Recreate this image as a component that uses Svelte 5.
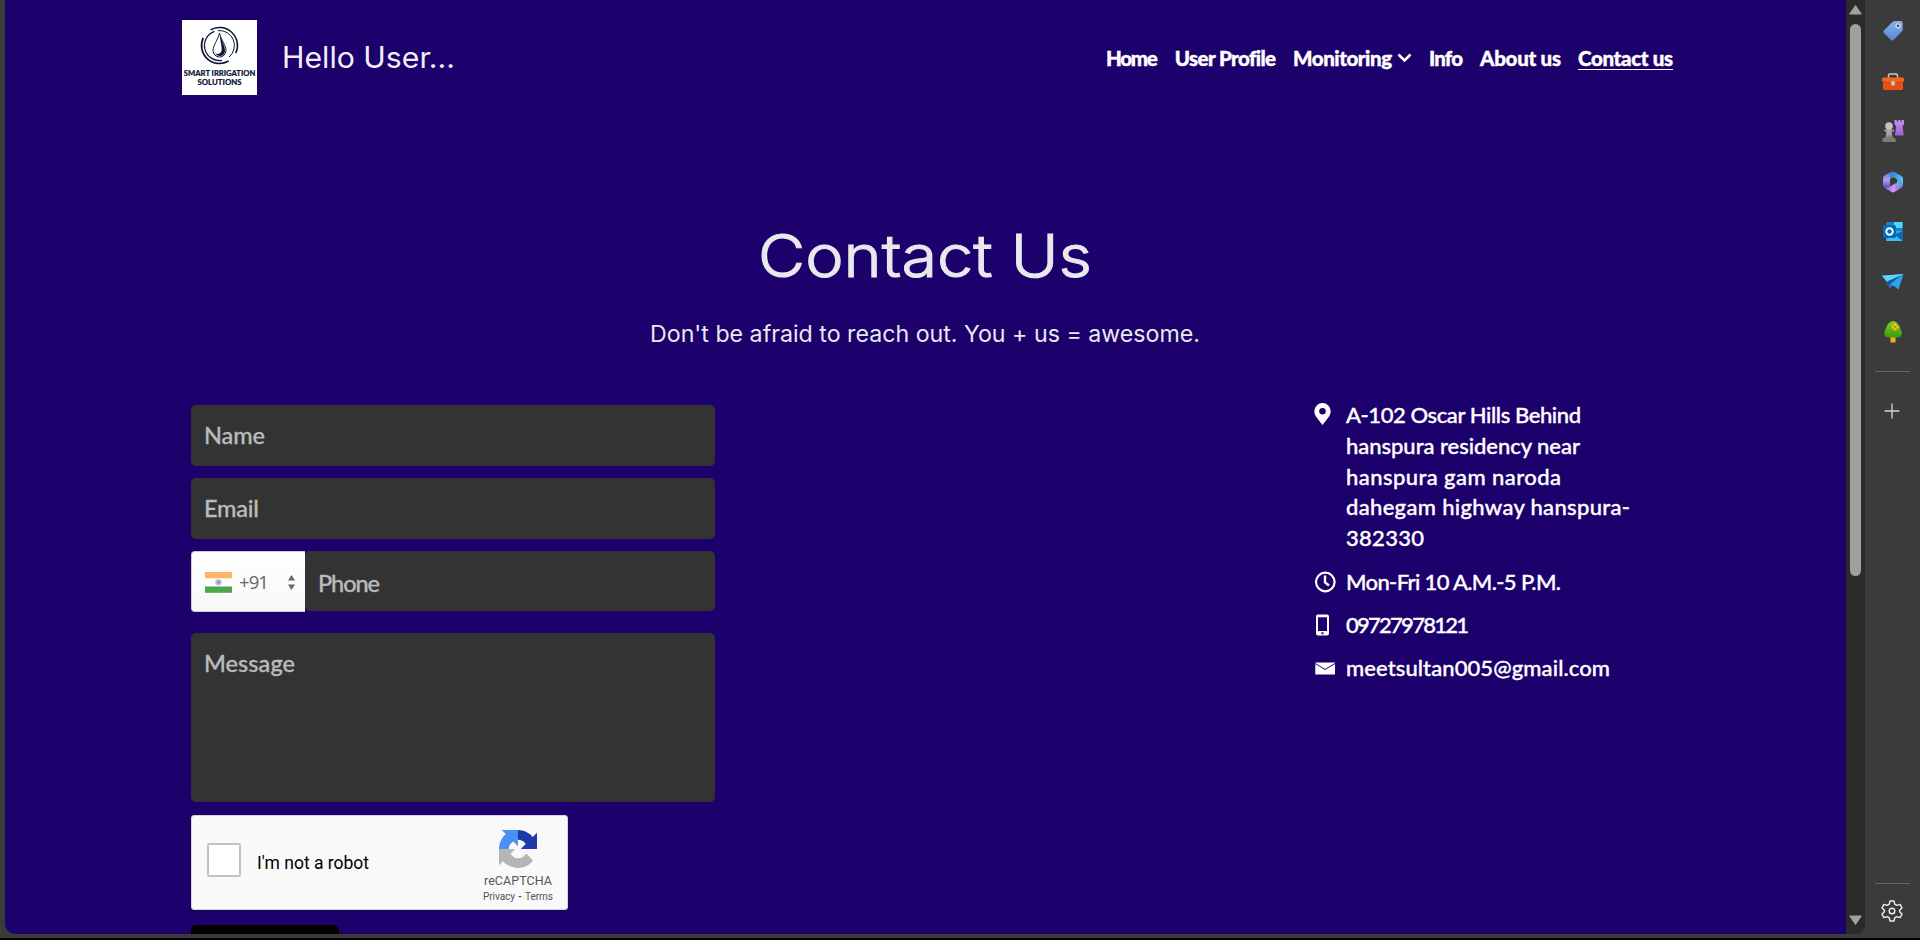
<script>
  const nav = [
    { label: 'Home', w: 52 },
    { label: 'User Profile', w: 101 },
    { label: 'Monitoring', w: 99, menu: true },
    { label: 'Info', w: 34 },
    { label: 'About us', w: 81 },
    { label: 'Contact us', w: 95, active: true }
  ];
  const address = [
    ['A-102 Oscar Hills Behind', 235],
    ['hanspura residency near', 234],
    ['hanspura gam naroda', 215],
    ['dahegam highway hanspura-', 284],
    ['382330', 78]
  ];

  // Spreads the letters of a line so that it fills the given width.
  function track(node, width) {
    const natural = node.getBoundingClientRect().width;
    const gap = (width - natural) / Math.max(1, node.textContent.length - 1);
    node.style.letterSpacing = gap + 'px';
    node.style.marginRight = -gap + 'px';
  }

  // Widens the letters themselves, for the extended display headings.
  function stretch(node, width) {
    const natural = node.getBoundingClientRect().width;
    node.style.width = width + 'px';
    node.style.textAlign = 'left';
    node.style.transformOrigin = '0 0';
    node.style.transform = `scaleX(${width / natural})`;
  }
</script>

<div class="window">
  <main class="page">
    <header>
      <div class="logo">
        <svg width="75" height="75" viewBox="0 0 75 75">
          <g fill="none" stroke="#0b1736">
            <path d="M28.500 9.900A18 18 0 0 1 53.800 33.100" stroke-width="1.500" />
            <path d="M36 10.600A15 15 0 0 1 47.100 37" stroke-width="1" />
            <path d="M21.200 17.900A18 18 0 0 0 46.500 41.100" stroke-width="1.700" />
            <path d="M32.400 11.400A15 15 0 0 0 40 40.300" stroke-width="1.200" />
            <path d="M37.500 13C36 20 31 25 31 30.500A6.500 6.500 0 0 0 44 30.500C44 25 39 20 37.500 13Z" stroke-width="1" />
          </g>
          <path d="M38 15C40 22 43 26 43 30.500C43 36 37 38 33 33.500C38 35 40.500 32 39.500 27C39 22 38 20 38 15Z" fill="#0b1736" />
          <g font-family="Lato, sans-serif" font-weight="900" font-size="6.800" fill="#0b1736" stroke="#0b1736" stroke-width=".15">
            <text x="1.800" y="56" textLength="71.500" lengthAdjust="spacingAndGlyphs">SMART IRRIGATION</text>
            <text x="15.500" y="65" textLength="44" lengthAdjust="spacingAndGlyphs">SOLUTIONS</text>
          </g>
        </svg>
      </div>
      <div class="hello"><span use:stretch={173}>Hello User...</span></div>
      <nav>
        {#each nav as item}
          <a class:active={item.active} href="#top">
            <span class="label" use:track={item.w}>{item.label}</span>
            {#if item.menu}
              <svg class="chev" width="15" height="10" viewBox="0 0 15 10"><path d="M1.500 1.500L7.500 7.500L13.500 1.500" fill="none" stroke="#fff" stroke-width="2.600" /></svg>
            {/if}
          </a>
        {/each}
      </nav>
    </header>

    <section class="title">
      <h1><span use:stretch={334}>Contact Us</span></h1>
      <p><span use:stretch={550}>Don't be afraid to reach out. You + us = awesome.</span></p>
    </section>

    <div class="columns">
      <form>
        <div class="field"><span use:track={61}>Name</span></div>
        <div class="field"><span use:track={55}>Email</span></div>
        <div class="phone">
          <div class="code">
            <svg width="27" height="21" viewBox="0 0 27 21">
              <rect width="27" height="21" fill="#fff" />
              <rect width="27" height="6.300" fill="#ffb366" />
              <rect y="14.500" width="27" height="6.300" fill="#4ca64c" />
              <circle cx="13.500" cy="10.300" r="3.300" fill="#c5c3e3" />
              <circle cx="13.500" cy="10.300" r="1.500" fill="#8a86c4" />
            </svg>
            <span class="dial">+91</span>
            <svg class="sort" width="7" height="15" viewBox="0 0 7 15"><path d="M0 5.500L3.500 0L7 5.500ZM0 9.500L3.500 15L7 9.500Z" fill="#666" /></svg>
          </div>
          <div class="field number"><span use:track={62}>Phone</span></div>
        </div>
        <div class="field message"><span use:track={91}>Message</span></div>
        <div class="captcha">
          <div class="box"></div>
          <div class="robot"><span use:track={112}>I'm not a robot</span></div>
          <div class="brand">
            <svg width="38" height="38" viewBox="0 0 64 64">
              <path d="M64 31.955l-.033-1.370V4.687l-7.160 7.160C50.948 4.674 42.033.093 32.050.093c-10.400 0-19.622 4.960-25.458 12.640l11.736 11.860a15.550 15.550 0 0 1 4.754-5.334c2.050-1.600 4.952-2.906 8.968-2.906.485 0 .860.057 1.135.163 4.976.393 9.288 3.140 11.828 7.124l-8.307 8.307L64 31.953" fill="#1c3aa9" />
              <path d="M31.862.094l-1.370.033H4.594l7.160 7.160C4.580 13.147 0 22.060 0 32.046c0 10.400 4.960 19.622 12.640 25.458L24.500 45.768a15.550 15.550 0 0 1-5.334-4.754c-1.600-2.050-2.906-4.952-2.906-8.968 0-.485.057-.860.163-1.135.393-4.976 3.140-9.288 7.124-11.828l8.307 8.307L31.860.095" fill="#4a90f5" />
              <path d="M.001 32.045l.033 1.370v25.898l7.160-7.160c5.860 7.173 14.774 11.754 24.760 11.754 10.400 0 19.622-4.960 25.458-12.640l-11.736-11.860a15.550 15.550 0 0 1-4.754 5.334c-2.050 1.600-4.952 2.906-8.968 2.906-.485 0-.860-.057-1.135-.163-4.976-.393-9.288-3.140-11.828-7.124l8.307-8.307c-10.522.040-22.400.066-27.295-.005" fill="#b5b5b5" />
            </svg>
            <div class="re"><span use:track={68}>reCAPTCHA</span></div>
            <div class="terms"><span use:track={32}>Privacy</span><b>-</b><span use:track={28}>Terms</span></div>
          </div>
        </div>
        <div class="submit"></div>
      </form>

      <aside class="contact">
        <div class="row addr">
          <svg width="22" height="22" viewBox="0 0 22 22"><path fill-rule="evenodd" d="M8.500 0A8.200 8.200 0 0 0 .3 8.200C.3 13 5 17 8.500 22C12 17 16.700 13 16.700 8.200A8.200 8.200 0 0 0 8.500 0ZM8.500 5A3.300 3.300 0 1 1 8.500 11.600A3.300 3.300 0 1 1 8.500 5Z" fill="#fff" /></svg>
          <div>
            {#each address as [line, w]}
              <div class="line"><span use:track={w}>{line}</span></div>
            {/each}
          </div>
        </div>
        <div class="row">
          <svg width="22" height="22" viewBox="0 0 22 22" fill="none" stroke="#fff"><circle cx="11.300" cy="11" r="9.300" stroke-width="2.200" /><path d="M11 4.500V11.500L15 14.500" stroke-width="2.400" /></svg>
          <div class="line"><span use:track={215}>Mon-Fri 10 A.M.-5 P.M.</span></div>
        </div>
        <div class="row">
          <svg width="22" height="22" viewBox="0 0 22 22"><path fill-rule="evenodd" d="M4 .5H13Q15 .5 15 2.500V19.500Q15 21.500 13 21.500H4Q2 21.500 2 19.500V2.500Q2 .5 4 .5ZM4 3.300V17H13V3.300ZM7.500 18.300V20.200H9.500V18.300Z" fill="#fff" /></svg>
          <div class="line"><span use:track={123}>09727978121</span></div>
        </div>
        <div class="row">
          <svg width="22" height="22" viewBox="0 0 22 22"><path d="M1.300 5.500H21V17.500H1.300Z" fill="#fff" /><path d="M1.300 6.500L11 12.500L21 6.500" fill="none" stroke="#1c006b" stroke-width="1" /></svg>
          <div class="line"><span use:track={264}>meetsultan005@gmail.com</span></div>
        </div>
      </aside>
    </div>
  </main>

  <div class="scroll">
    <svg width="13" height="10" viewBox="0 0 13 10"><path d="M6.500 .5L12.300 9H.7Z" fill="#a0a0a0" stroke="#a0a0a0" stroke-linejoin="round" /></svg>
    <div class="thumb"></div>
    <svg class="down" width="13" height="10" viewBox="0 0 13 10"><path d="M6.500 9.500L12.300 1H.7Z" fill="#a0a0a0" stroke="#a0a0a0" stroke-linejoin="round" /></svg>
  </div>

  <div class="rail">
    <svg viewBox="0 0 22 22">
      <defs>
        <linearGradient id="tag" x2="0" y2="1"><stop stop-color="#86b2f3" /><stop offset="1" stop-color="#5583d8" /></linearGradient>
        <linearGradient id="rook" x2="0" y2="1"><stop stop-color="#c88df5" /><stop offset="1" stop-color="#9b63d3" /></linearGradient>
        <linearGradient id="pawn" x2="0" y2="1"><stop stop-color="#c4c4c4" /><stop offset="1" stop-color="#8a8a8a" /></linearGradient>
        <linearGradient id="m1" x2="0" y2="1"><stop stop-color="#5a68d8" /><stop offset=".5" stop-color="#a9a0f0" /><stop offset="1" stop-color="#4c4fc5" /></linearGradient>
        <linearGradient id="m2" x2="1" y2="1"><stop stop-color="#2176d2" /><stop offset="1" stop-color="#66e0fa" /></linearGradient>
        <linearGradient id="m3" x2="1" y2="0"><stop stop-color="#8b5ad8" /><stop offset=".5" stop-color="#d295f1" /><stop offset="1" stop-color="#7450c8" /></linearGradient>
        <linearGradient id="leaf" x2="0" y2="1"><stop stop-color="#7ed321" /><stop offset="1" stop-color="#3c9a0c" /></linearGradient>
      </defs>
      <path d="M12 1.300L18.500 1Q20.700 1 20.700 3V9.500Q20.700 10.500 20 11.200L11.500 20Q10.300 21.200 9 20L1.800 13Q.6 11.700 1.800 10.500L10.500 2Q11.200 1.300 12 1.300Z" fill="url(#tag)" />
      <circle cx="16" cy="5.800" r="2" fill="#444" stroke="#d8e2ee" stroke-width="1.300" />
    </svg>
    <svg viewBox="0 -1 22 22">
      <path d="M6.500 7V4.500Q6.500 3 8 3H14Q15.500 3 15.500 4.500V7" fill="none" stroke="#c9c9c9" stroke-width="1.500" />
      <path d="M1 11H21V17.500Q21 19 19.500 19H2.500Q1 19 1 17.500Z" fill="#e65012" />
      <path d="M1.500 6.500H20.500Q22 6.500 22 8V10.500Q16 13 11 12.500Q6 13 0 10.500V8Q0 6.500 1.500 6.500Z" fill="#f2651d" />
      <path d="M0 10.500Q5 12 11 12T22 10.500" stroke="#b63b0c" fill="none" stroke-width=".8" /><rect x="9" y="10" width="4" height="4.500" rx="1.500" fill="#c6c6c6" />
    </svg>
    <svg viewBox="0 0 22 22">
      <path d="M12.500 0H14.800V1.500H16.200V0H18.500V1.500H19.700V0H22V4.500L20.500 6L21.800 15.500H13L14.200 6L12.500 4.500Z" fill="url(#rook)" />
      <circle cx="7" cy="6" r="3.800" fill="#c2c2c2" /><path d="M5 9H9L10.500 17.500H3.500Z" fill="url(#pawn)" /><path d="M3 10.500H11" stroke="#a4a4a4" stroke-width="2" stroke-linecap="round" /><path d="M0 20Q0 18.500 2 18L3.500 16.500H10.500L12 18Q14 18.500 14 20.500Q14 22 12 22H2Q0 22 0 20Z" fill="#7c7c7c" />
    </svg>
    <svg viewBox="0 0 22 22">
      <path d="M9 1L3 4Q1 5 1 7.500V14Q1 16 3 16.800Q5.500 17.500 8 15V8L12 5.500V1Q10.500 .3 9 1Z" fill="url(#m1)" />
      <path d="M9 1Q10.500 .3 12.500 1L19.500 5Q21 6 21 8V14Q20.500 11.500 18 10L10.500 5.500L8 8V3Z" fill="url(#m2)" />
      <path d="M21 11V14.500Q21 16 19.500 17L12.500 21Q11 21.800 9.500 21L2 16.500Q5 17.500 8 15.500L15 11.500V8L18 10Q20.500 11.500 21 14Z" fill="url(#m3)" />
      <path d="M15 8.300L18 10Q21 11.500 21 14Q19 17 15 16Z" fill="#4db8ee" opacity=".75" />
    </svg>
    <svg viewBox="0 0 22 22">
      <path d="M5.500 1H19Q20.500 1 20.500 2.500V11H4V2.500Q4 1 5.500 1Z" fill="#1684d3" /><path d="M12 1H20.500V7H12Z" fill="#50d9ff" />
      <path d="M4 10H21V18.500Q21 20 19.500 20H5.500Q4 20 4 18.500Z" fill="#28a8ea" /><path d="M12 14L21 10V20Z" fill="#1066b0" /><path d="M4 19L13 14L20 20H5Z" fill="#39bdf1" />
      <rect x="1" y="4" width="13" height="13" rx="1.500" fill="#0869b8" /><circle cx="7.500" cy="10.500" r="3.200" fill="none" stroke="#fff" stroke-width="1.900" />
    </svg>
    <svg viewBox="0 0 22 22">
      <path d="M0 4.800L21.500 3L16.500 18.500L10.500 14L7.500 17.500L5 11.500Z" fill="#29a5e9" /><path d="M0 4.800L21.500 3L5 10.500Z" fill="#65d2f8" /><path d="M5 10.500L19 4.500L9 12.500L7.500 17.500Z" fill="#12589f" />
    </svg>
    <svg viewBox="0 0 22 22">
      <rect x="8.500" y="14" width="5" height="7.500" fill="#f6ad13" />
      <path d="M11 0Q14 0 16.500 3.500Q18.500 6 18.500 8.500Q21 12 19 15Q17.500 17 14 16.500H7Q3.500 16.500 2.500 14Q1.500 11 3.500 8.500Q4 5 6.500 2.500Q8.500 0 11 0Z" fill="url(#leaf)" />
      <g fill="#ffca1a"><circle cx="13" cy="3.800" r="1.500" /><circle cx="15" cy="6" r="1.500" /><circle cx="11" cy="6" r="1.500" /><circle cx="13" cy="8" r="1.500" /></g><circle cx="13" cy="6" r="1.600" fill="#f66f1b" />
    </svg>
    <hr />
    <svg class="plus" viewBox="0 0 22 22"><path d="M11 3.500V18.500M3.500 11H18.500" stroke="#d5d5d5" stroke-width="1.300" /></svg>
    <hr class="second" />
    <svg class="gear" viewBox="0 0 22 22" fill="none" stroke="#eee" stroke-width="1.400" stroke-linejoin="round">
      <path d="M9 1H13L13.700 4.200L15.800 5.400L19 4.400L21 7.900L18.600 10.200V11.800L21 14.100L19 17.600L15.800 16.600L13.700 17.800L13 21H9L8.300 17.800L6.200 16.600L3 17.600L1 14.100L3.400 11.800V10.200L1 7.900L3 4.400L6.200 5.400L8.300 4.200Z" /><circle cx="11" cy="11" r="2.800" />
    </svg>
  </div>
</div>

<style>
  :global(body) { margin: 0; background: #000; overflow: hidden; }
  * { box-sizing: border-box; }
  span { display: inline-block; white-space: pre; }
  svg { display: block; flex: none; }
  .window { width: 1920px; height: 940px; background: #3b3b3b; padding: 0 0 4px 5px; display: flex; border-bottom: 2px solid #000; }
  .page { width: 1841px; height: 934px; background: #1c006b; border-bottom-left-radius: 10px; overflow: hidden; color: #fff; }
  header { height: 115px; padding: 20px 173px 0 177px; display: flex; }
  .logo { width: 75px; height: 75px; background: #fff; }
  .hello { margin-left: 25px; padding-top: 19px; font: 400 29.500px/36px Inter, sans-serif; color: #f1eff7; }
  nav { margin-left: auto; padding-top: 23px; display: flex; gap: 17px; }
  nav a { color: #fff; text-decoration: none; font: 900 20.500px/30px Lato, sans-serif; -webkit-text-stroke: .4px #fff; height: 27px; display: flex; }
  a.active { border-bottom: 1px solid #fff; }
  .chev { margin: 10px 0 0 5px; }
  .title { height: 290px; padding-top: 101px; text-align: center; color: #e9e8ed; }
  h1 { margin: 0; font: 300 59px/80px Inter, sans-serif; -webkit-text-stroke: 1.100px #e9e8ed; }
  h1 span { margin-left: -2px; }
  p { margin: 20px 0 0; font: 400 22.500px/36px Inter, sans-serif; }
  p span { margin-left: -1px; }
  .columns { display: flex; padding-left: 186px; }
  form { width: 524px; }
  .field { height: 61px; background: #333; border-radius: 5px; color: #bbb; font: 500 23.500px/32px Lato, sans-serif; -webkit-text-stroke: .3px #bbb; padding: 14px 13px; margin-bottom: 12px; }
  .phone { display: flex; height: 82px; }
  .code { width: 114px; height: 61px; background: linear-gradient(#fff, #f7f7f7); border: 1px solid #ccc; border-right: 0; border-radius: 4px 0 0 4px; display: flex; align-items: center; padding: 2px 0 0 13px; }
  .dial { font: 400 18.500px/24px "Open Sans", sans-serif; color: #666; margin: -2px 0 0 7px; letter-spacing: -.9px; }
  .sort { margin: 0 10px 0 auto; }
  .number { flex: 1; height: 60px; padding-top: 16px; }
  .message { height: 169px; margin-bottom: 13px; padding-top: 14px; }
  .captcha { width: 377px; height: 95px; background: #f9f9f9; border: 1px solid #d3d3d3; border-radius: 3px; display: flex; color: #000; padding-left: 15px; }
  .box { width: 34px; height: 34px; border: 2px solid #c1c1c1; border-radius: 2px; background: #fff; margin-top: 27px; }
  .robot { margin: 35px 0 0 16px; font: 400 17.500px/24px Roboto, sans-serif; }
  .brand { margin: 14px 9px 0 auto; width: 80px; color: #555; font-family: Roboto, sans-serif; display: flex; flex-direction: column; align-items: center; }
  .re { font-size: 12.500px; line-height: 16px; margin-top: 5px; }
  .terms { font-size: 10px; line-height: 14px; margin-top: 1px; display: flex; }
  .terms b { width: 10px; text-align: center; }
  .submit { width: 148px; height: 50px; margin-top: 15px; border-radius: 5px; background: #000; }
  .contact { margin-left: 413px; padding-left: 186px; margin-top: -6px; }
  .row { display: flex; height: 43px; gap: 10px; }
  .row > svg { margin-top: 5px; }
  .addr { height: 167px; }
  .addr > svg { margin-top: 4px; }
  .line { height: 30.800px; font: 500 22px/31px Lato, sans-serif; -webkit-text-stroke: .35px #fff; }
  .scroll { width: 19px; height: 934px; background: #2b2b2b; border-bottom-right-radius: 9px; padding-top: 5px; display: flex; flex-direction: column; align-items: center; }
  .thumb { width: 11px; height: 552px; margin-top: 9px; background: #9f9f9f; border-radius: 6px; }
  .down { margin-top: 339px; }
  .rail { width: 55px; height: 934px; padding: 20px 0 0; display: flex; flex-direction: column; align-items: center; gap: 28.200px; }
  .rail > svg { width: 22px; height: 22px; margin-left: 1px; }
  hr { margin: 0; border: 0; width: 35px; height: 1px; background: #666; flex: none; }
  .rail .plus { margin: -1px 0 0 -1px; }
  .second { margin-top: 433px; }
  .rail .gear { margin-top: -12px; margin-left: -1px; }
</style>
